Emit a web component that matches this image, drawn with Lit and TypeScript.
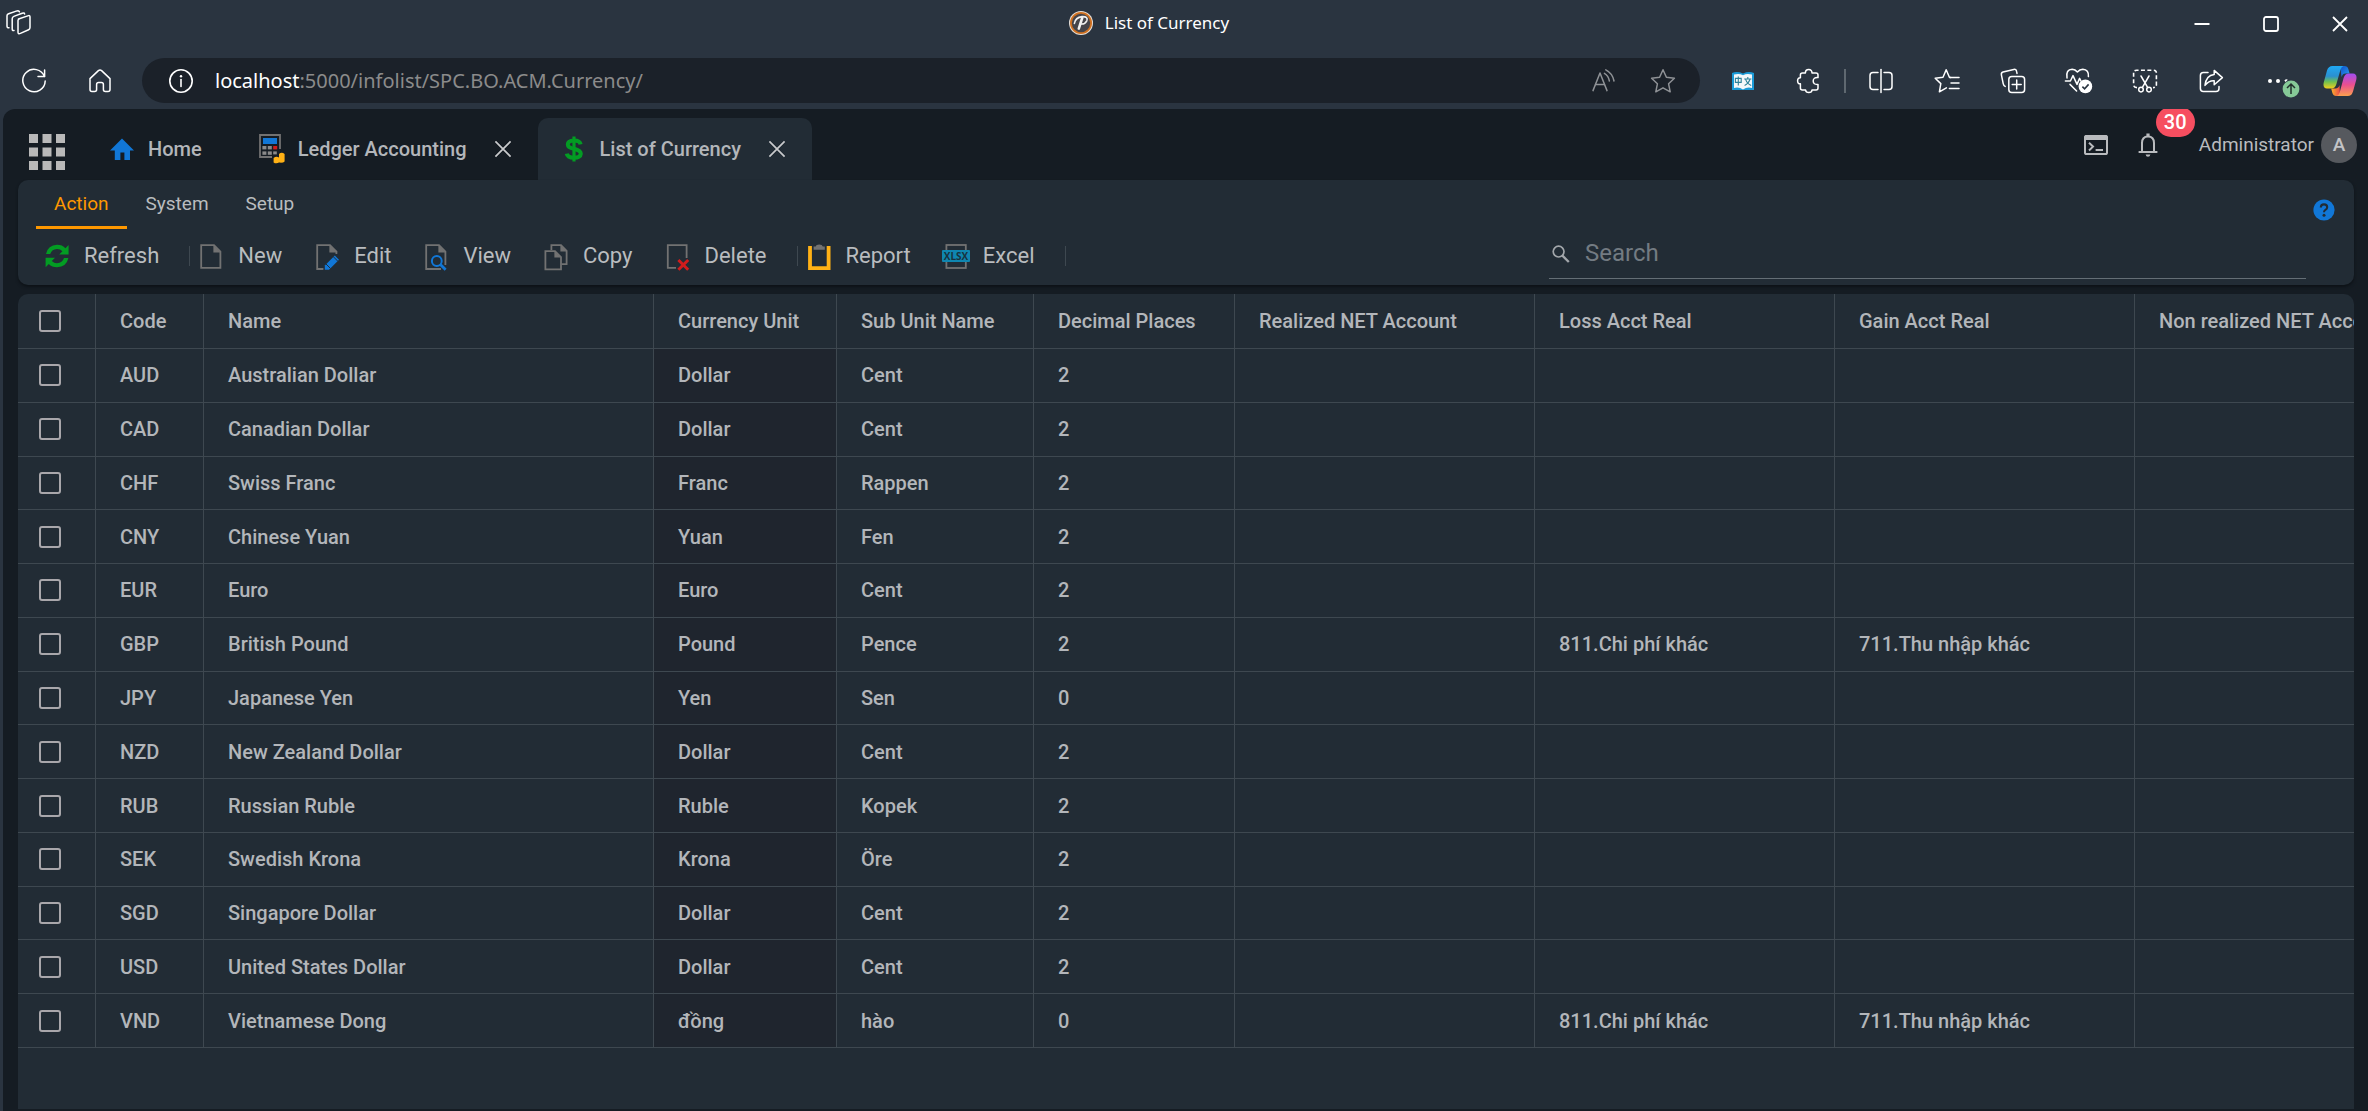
import { LitElement, html, css, svg, type TemplateResult } from "lit";
import { customElement, state } from "lit/decorators.js";
import { classMap } from "lit/directives/class-map.js";

type Icon = TemplateResult;

const box = (w: number, h: number, body: unknown): Icon =>
  html`<svg width=${w} height=${h} viewBox="0 0 ${w} ${h}" fill="none" aria-hidden="true">${body}</svg>`;

const line = (w: number, h: number, body: unknown): Icon =>
  box(w, h, svg`<g stroke="currentColor" stroke-width="1.5" stroke-linecap="round" stroke-linejoin="round">${body}</g>`);

/* Browser icons */
const workspaces = line(26, 26, svg`
  <path d="M12.5 9 L22.5 5.6 Q24 5.2 24 7 V17.5 Q24 19.2 22.6 19.8 L14.4 23.4 Q12 24.4 12 22.2 V10.6 Q12 9.2 13.4 8.7"/>
  <path d="M8 20.5 Q6.2 21 6.2 19 V8.8 Q6.2 7 7.8 6.4 L16.2 3.2 Q18.4 2.4 18.6 4"/>
  <path d="M3 17.8 Q1 18 1 16 V5.8 Q1 4.4 2.6 3.8 L11 .9 Q13 .4 13.4 1.8"/>`);
const reload = line(26, 26, svg`<path d="M23.4 8.4 A11.2 11.2 0 1 0 24.2 13"/><path d="M23.6 2 V8.6 H17"/>`);
const home = line(24, 26, svg`<path d="M2 10.6 L10.4 2.6 Q12 1.4 13.6 2.6 L22 10.6 V21.6 Q22 23.6 20 23.6 H17.4 Q15.4 23.6 15.4 21.6 V16.6 Q15.4 14.6 13.4 14.6 H10.6 Q8.6 14.6 8.6 16.6 V21.6 Q8.6 23.6 6.6 23.6 H4 Q2 23.6 2 21.6 Z"/>`);
const info = box(26, 26, svg`<circle cx="13" cy="13" r="11.2" stroke="currentColor" stroke-width="1.6"/><path d="M13 11.6 V18.4" stroke="currentColor" stroke-width="1.6" stroke-linecap="round"/><circle cx="13" cy="8.2" r="1.2" fill="currentColor"/>`);
const readAloud = line(26, 26, svg`<path d="M2 22.6 L9 5 L16 22.6"/><path d="M4.6 16.4 H13.4"/><path d="M13.4 5.4 Q17.4 7.6 18.4 13"/><path d="M14.8 1.8 Q21.6 5.2 23 13"/>`);
const star = line(26, 26, svg`<path d="M13 1.8 L16.4 9.2 L24.4 10.2 L18.6 15.8 L20.2 23.8 L13 19.8 L5.8 23.8 L7.4 15.8 L1.6 10.2 L9.6 9.2 Z"/>`);
const dictionary = box(24, 22, svg`
  <path d="M1 3 Q6 1 12 3.4 Q18 1 23 3 V20 H1 Z" fill="#1b9ad6"/>
  <path d="M3 4.6 Q8 3 12 5.2 Q16 3 21 4.6 V18 Q16 16.8 12 19.4 Q8 16.8 3 18 Z" fill="#f4f7f9"/>
  <g stroke="#2f8299" stroke-width="1.1"><path d="M4.4 8.4 H10.2 V12.4 H4.4 Z M7.3 6.6 V15.6"/><path d="M13.2 9 H20.4 M16.8 7 V9 M19 9.4 Q17.6 13.6 13.6 15.4 M14.6 9.4 Q16 13.6 20.2 15.4"/></g>`);
const puzzle = line(26, 26, svg`<path d="M9.4 5 H6.4 Q4.4 5 4.4 7 V9.8 Q1.6 9.6 1.6 12.8 Q1.6 16 4.4 15.8 V20 Q4.4 22 6.4 22 H9.6 Q9.8 24.6 12.8 24.6 Q15.8 24.6 16 22 H20 Q22 22 22 20 V16.4 Q17.2 16.8 17.2 13 Q17.2 9.2 22 9.6 V7 Q22 5 20 5 H16 Q16 1.6 12.7 1.6 Q9.4 1.6 9.4 5 Z"/>`);
const splitScreen = line(26, 26, svg`<path d="M10 4.4 H5 Q2 4.4 2 7.4 V18.6 Q2 21.6 5 21.6 H10"/><path d="M16 4.4 H21 Q24 4.4 24 7.4 V18.6 Q24 21.6 21 21.6 H16"/><path d="M13 1.6 V24.4"/>`);
const favorites = line(26, 26, svg`<path d="M16.8 9.4 L15.4 9.2 L12.2 1.8 L9 9.2 L1.2 10.2 L6.8 15.6 L5.4 23.8 L12.4 19.8"/><path d="M15.6 9.4 H25 M17 15 H25 M15.4 20.4 H25"/>`);
const collections = line(26, 26, svg`<rect x="8.8" y="8.6" width="15.8" height="15.8" rx="3"/><path d="M16.7 12 V21 M12.2 16.5 H21.2"/><path d="M5.2 18.4 Q3.6 17.6 3.2 15.6 L1.4 6.8 Q1 4.6 3 4 L13.8 1.4 Q16.2 1 16.6 3.4 L17 5.4"/>`);
const essentials = box(30, 28, svg`
  <g stroke="currentColor" stroke-width="1.5" stroke-linecap="round" stroke-linejoin="round">
  <path d="M3 11 Q1.6 2.4 8.2 2.2 Q11.2 2.2 13.4 5 Q15.6 2.2 18.8 2.2 Q25 2.6 24.4 9.6"/>
  <path d="M1.4 14 H6.4 L9 8.6 L13 17.4 L15.6 11.4 L17 14"/><path d="M6 17.4 L12.6 24"/></g>
  <circle cx="21.4" cy="19.4" r="6.8" fill="currentColor"/><path d="M18.4 19.6 L20.6 21.8 L24.6 17.4" stroke="#2a3440" stroke-width="1.6"/>`);
const screenshot = box(26, 26, svg`
  <path d="M5 19.6 Q1.6 19.6 1.6 16.6 V5 Q1.6 2.2 4.6 2.2 H21.4 Q24.4 2.2 24.4 5 V16.6 Q24.4 19.6 21 19.6" stroke="currentColor" stroke-width="1.6" stroke-dasharray="4 2.4"/>
  <g stroke="currentColor" stroke-width="1.5" stroke-linecap="round"><path d="M9 8 L15.6 19.4 M17 8 L10.4 19.4"/><circle cx="9" cy="21.6" r="2.3"/><circle cx="17" cy="21.6" r="2.3"/></g>`);
const share = line(26, 26, svg`<path d="M10 4.4 H5.4 Q2.4 4.4 2.4 7.4 V20.6 Q2.4 23.6 5.4 23.6 H18 Q21 23.6 21 20.6 V18.4"/><path d="M16.2 2.4 L24.4 9.6 L16.2 16.8 V12.8 Q11 12.4 7 17.4 Q8 7.2 16.2 6.4 Z"/>`);
const more = box(36, 34, svg`
  <g fill="currentColor"><circle cx="4" cy="17" r="2"/><circle cx="12" cy="17" r="2"/><path d="M18.4 16.6 Q20 14.6 21.8 15.8 L19.6 18 Z"/></g>
  <circle cx="25" cy="25" r="8.4" fill="#86c997"/><path d="M25 30 V20.2 M21 24 L25 20 L29 24" stroke="#22302c" stroke-width="1.5"/>`);
const copilot = html`<svg width="34" height="32" viewBox="0 0 34 32" aria-hidden="true">
  <defs>
    <linearGradient id="cpA" x1="0" y1="0" x2="0" y2="1"><stop offset="0" stop-color="#1fa9f4"/><stop offset=".45" stop-color="#2b8fd0"/><stop offset=".7" stop-color="#6fc04f"/><stop offset="1" stop-color="#f4cf1c"/></linearGradient>
    <linearGradient id="cpB" x1="0" y1="0" x2="0" y2="1"><stop offset="0" stop-color="#a24df2"/><stop offset=".5" stop-color="#ea4f8f"/><stop offset="1" stop-color="#fba04e"/></linearGradient>
    <linearGradient id="cpC" x1="0" y1="0" x2="1" y2="1"><stop offset="0" stop-color="#0d4fc9"/><stop offset="1" stop-color="#2ea0f0"/></linearGradient>
    <linearGradient id="cpD" x1="0" y1="0" x2="1" y2="0"><stop offset="0" stop-color="#fbb02c"/><stop offset="1" stop-color="#ec4a4a"/></linearGradient>
  </defs>
  <path d="M17 1 H21.5 Q24.5 1 25.4 4.2 L26.6 8.6 H22.6 Q19.6 8.6 18.6 12 Z" fill="url(#cpC)"/>
  <path d="M17 31 H13 Q10.4 31 9.4 28 L8.2 23.6 H12.4 Q15.6 23.4 16.6 20 Z" fill="url(#cpD)"/>
  <path d="M9.4 1 H20.6 Q18.4 1.6 17.4 5 L13.4 19 Q12.2 23.6 8 23.6 H4 Q-.6 23.2 .8 17.2 L4 5.6 Q5.4 1 9.4 1 Z" fill="url(#cpA)"/>
  <path d="M24.8 31 H13.6 Q15.8 30.4 16.8 27 L20.6 13 Q22 8.6 26 8.6 H30 Q34.6 9 33.2 15 L30 26.4 Q28.6 31 24.8 31 Z" fill="url(#cpB)"/>
</svg>`;
const favicon = html`<svg class="favicon" width="24" height="24" viewBox="0 0 24 24" aria-hidden="true">
  <circle cx="12" cy="12" r="12" fill="#e6dfd8"/><circle cx="12" cy="12" r="11" fill="#cf7020"/><circle cx="12" cy="12" r="9.2" fill="#45444a"/>
  <g fill="none" stroke="#f1f1f1" stroke-linecap="round"><path d="M13.2 7 L9.8 17.6" stroke-width="2.6"/><path d="M5.4 12.4 Q6.4 6.4 13 5.6 Q19.6 5.4 17.8 9.8 Q16 13.4 12 13" stroke-width="1.6"/></g>
</svg>`;
const winMin = box(16, 16, svg`<path d="M.5 8 H15.5" stroke="currentColor" stroke-width="2"/>`);
const winMax = box(16, 16, svg`<rect x="1" y="1" width="14" height="14" rx="2" stroke="currentColor" stroke-width="1.8"/>`);
const winClose = box(16, 16, svg`<path d="M1 1 L15 15 M15 1 L1 15" stroke="currentColor" stroke-width="1.8"/>`);

/* Application icons */
const launcher = box(36, 36, svg`<g fill="currentColor">${[0, 13.5, 27].map((y) => [0, 13.5, 27].map((x) => svg`<rect x=${x} y=${y} width="9" height="9"/>`))}</g>`);
const house = box(24, 24, svg`<path d="M12 1.4 L24 13.4 H20 V23 H14.4 V15.6 H10.4 V23 H4.8 V13.4 H0 Z" fill="#1177d7"/>`);
const calculator = box(26, 30, svg`
  <path d="M13 23 H1 V1 H21 V15" stroke="#727272" stroke-width="1.8"/>
  <rect x="4" y="4" width="14" height="6" fill="#1177d7"/>
  <g fill="#8a8a8a"><rect x="3.4" y="12" width="4" height="3.4"/><rect x="8.8" y="12" width="4" height="3.4"/><rect x="3.4" y="17.4" width="4" height="3.4"/><rect x="8.8" y="17.4" width="4" height="3.4"/><rect x="14.2" y="17.4" width="3.6" height="3"/></g>
  <rect x="14.2" y="12" width="4" height="3.4" fill="#d11c1c"/>
  <g fill="#ffb115"><path d="M20 20 Q22.6 17.6 25.6 20 V27.4 Q24.4 28.8 21 28.6 H20 Z"/><path d="M14.6 24 Q17 21.8 20 23.4 V28.6 Q17 30 14.6 28.4 Z"/></g>`);
const dollar = box(24, 28, svg`<g stroke="#039c23"><path d="M18.6 9.4 Q18 5.4 12 5.4 Q5.8 5.6 5.8 9.4 Q5.8 12.4 12 13.8 Q18.8 15.4 18.8 18.8 Q18.4 22.8 12 22.8 Q5.4 22.6 4.8 18.6" stroke-width="4"/><path d="M12 1.4 V26.6" stroke-width="3.2"/></g>`);
const tabClose = box(18, 18, svg`<path d="M1.4 1.4 L16.6 16.6 M16.6 1.4 L1.4 16.6" stroke="currentColor" stroke-width="1.7"/>`);
const consoleIcon = box(26, 22, svg`<rect x="2" y="2" width="22" height="18" rx="1.6" stroke="currentColor" stroke-width="2"/><path d="M1 5 Q1 1 3 1 H23 Q25 1 25 5 V6 H1 Z" fill="currentColor"/><path d="M6 8.8 L10 12.6 L6 16.4 M12.6 16 H20" stroke="currentColor" stroke-width="2"/>`);
const bell = box(22, 26, svg`<path d="M5 20 V11 Q5 4.4 11 4.4 Q17 4.4 17 11 V20" stroke="currentColor" stroke-width="2"/><path d="M1.6 20 H20.4" stroke="currentColor" stroke-width="2"/><path d="M9.4 1.4 H12.6 V4.4 H9.4 Z M8.6 22.4 H13.4 Q13 24.8 11 24.8 Q9 24.8 8.6 22.4 Z" fill="currentColor"/>`);
const help = box(22, 22, svg`<circle cx="11" cy="11" r="10.6" fill="#1177d7"/><path d="M7.8 8.6 Q7.8 5.4 11 5.4 Q14.2 5.4 14.2 8.2 Q14.2 9.8 12.4 10.8 Q11 11.6 11 13.2" stroke="#222c35" stroke-width="2.1"/><circle cx="11" cy="16.2" r="1.5" fill="#222c35"/>`);
const magnifier = box(20, 20, svg`<circle cx="7.6" cy="8.6" r="5.4" stroke="currentColor" stroke-width="1.7"/><path d="M11.4 12.6 L17.8 19" stroke="currentColor" stroke-width="2.3"/>`);

const grey = "#727272";
const refresh = box(30, 30, svg`<g fill="#039c23"><path d="M4 13 Q6 4 15 3.8 Q20.4 3.8 23.4 7.2 L26.6 4 V13.4 H17.2 L20.4 10.2 Q18.4 8 15 8 Q9.8 8.2 8.2 13 Z"/><path d="M26.4 17 Q24.4 26 15 26.2 Q10 26.2 6.8 23 L3.6 26.2 V16.8 H13 L9.8 20 Q12 22.2 15 22.2 Q20.4 22 22 17 Z"/></g>`);
const pageNew = box(30, 30, svg`<path d="M5.2 4.2 H18 L24.4 10.6 V26.8 H5.2 Z" stroke=${grey} stroke-width="1.8"/><path d="M17.4 4 V11.4 H24.8 Z" fill=${grey}/>`);
const pageEdit = box(30, 30, svg`<path d="M11.4 28 H5.2 V4.2 H18 L24.4 10.6 V13" stroke=${grey} stroke-width="1.8"/><path d="M17.4 4 V11.4 H25.2 V10.6 Z" fill=${grey}/><path d="M12.8 28.8 V24.6 L22.8 14.6 L27 18.8 L17 28.8 Z" fill="#1177d7"/><path d="M14 23 L18.6 27.6 M21 15.4 L26 20.4" stroke="#222c35" stroke-width="1"/>`);
const pageView = box(30, 30, svg`<path d="M20 28 H5.2 V4.2 H18 L24.4 10.6 V24" stroke=${grey} stroke-width="1.8"/><path d="M17.4 4 V11.4 H25 Z" fill=${grey}/><circle cx="15.8" cy="20" r="7" fill="#222c35"/><circle cx="15.8" cy="20" r="4.9" stroke="#1177d7" stroke-width="2"/><path d="M19.4 23.6 L24.6 28.8" stroke="#1177d7" stroke-width="2.8"/>`);
const pageCopy = box(30, 30, svg`<path d="M10.4 9 V4.2 H20 L25.6 9.8 V23.2 H20.4" stroke=${grey} stroke-width="1.8"/><path d="M19.4 4 V10.4 H26 Z" fill=${grey}/><path d="M4.4 10.2 H14 L20 16.2 V28.4 H4.4 Z" stroke=${grey} stroke-width="1.8"/><path d="M13.4 10 V16.6 H20 Z" fill=${grey}/>`);
const pageDelete = box(30, 30, svg`<path d="M13 26.8 H4.8 V4.2 H23.6 V17" stroke=${grey} stroke-width="1.8"/><path d="M15.4 19 L25.2 28.8 M25.2 19 L15.4 28.8" stroke="#d11c1c" stroke-width="3"/>`);
const clipboard = box(30, 30, svg`<path d="M6 5 V27.2 H24.6 V5" stroke="#ffb115" stroke-width="3.8"/><path d="M9.6 8.8 V5.4 H11.6 Q12 3.6 15.2 3.6 Q18.4 3.6 18.8 5.4 H20.8 V8.8 Z" fill=${grey}/>`);
const xlsx = html`<svg width="30" height="30" viewBox="0 0 30 30" fill="none" aria-hidden="true"><rect x="5.4" y="4" width="19.4" height="23" stroke=${grey} stroke-width="1.8"/><rect x="1" y="9" width="28" height="12" rx="1" fill="#0f86b0"/><text class="xlsx" x="15" y="18.6" text-anchor="middle" fill="#18323e">XLSX</text></svg>`;

interface Command { label: string; icon: Icon; split?: boolean }
const commands: Command[] = [
  { label: "Refresh", icon: refresh, split: true },
  { label: "New", icon: pageNew },
  { label: "Edit", icon: pageEdit },
  { label: "View", icon: pageView },
  { label: "Copy", icon: pageCopy },
  { label: "Delete", icon: pageDelete, split: true },
  { label: "Report", icon: clipboard },
  { label: "Excel", icon: xlsx, split: true },
];

const columns = [
  ["Code", "code"], ["Name", "name"], ["Currency Unit", "unit"], ["Sub Unit Name", "sub"], ["Decimal Places", "dec"],
  ["Realized NET Account", "acct"], ["Loss Acct Real", "acct"], ["Gain Acct Real", "acct"], ["Non realized NET Account", "acct"],
];

const loss = "811.Chi phí khác";
const gain = "711.Thu nhập khác";
const rows: string[][] = [
  ["AUD", "Australian Dollar", "Dollar", "Cent", "2", "", "", "", ""],
  ["CAD", "Canadian Dollar", "Dollar", "Cent", "2", "", "", "", ""],
  ["CHF", "Swiss Franc", "Franc", "Rappen", "2", "", "", "", ""],
  ["CNY", "Chinese Yuan", "Yuan", "Fen", "2", "", "", "", ""],
  ["EUR", "Euro", "Euro", "Cent", "2", "", "", "", ""],
  ["GBP", "British Pound", "Pound", "Pence", "2", "", loss, gain, ""],
  ["JPY", "Japanese Yen", "Yen", "Sen", "0", "", "", "", ""],
  ["NZD", "New Zealand Dollar", "Dollar", "Cent", "2", "", "", "", ""],
  ["RUB", "Russian Ruble", "Ruble", "Kopek", "2", "", "", "", ""],
  ["SEK", "Swedish Krona", "Krona", "Öre", "2", "", "", "", ""],
  ["SGD", "Singapore Dollar", "Dollar", "Cent", "2", "", "", "", ""],
  ["USD", "United States Dollar", "Dollar", "Cent", "2", "", "", "", ""],
  ["VND", "Vietnamese Dong", "đồng", "hào", "0", "", loss, gain, ""],
];

const reset = css`
  :host, * { box-sizing: border-box; }
  svg { display: block; flex: none; }
  button { display: flex; align-items: center; margin: 0; padding: 0; border: 0; background: none; color: inherit; font: inherit; cursor: pointer; }
`;

@customElement("browser-bar")
class BrowserBar extends LitElement {
  static styles = [reset, css`
    :host { display: block; background: #2a3440; color: #fff; font-family: "Noto Sans", sans-serif; }
    .title { display: flex; align-items: center; height: 43px; padding-top: 2px; }
    .lead { flex: 1 1 0; padding-left: 6px; }
    .caption { display: flex; align-items: center; gap: 12px; font-size: 17px; line-height: 24px; }
    .window { flex: 1 1 76px; display: flex; justify-content: flex-end; }
    .window button { justify-content: center; width: 69px; height: 41px; padding-top: 3px; }
    .window .close { width: 63px; padding-left: 6px; }
    .bar { display: flex; align-items: center; height: 66px; padding: 15px 0 6px 1px; }
    .cell { justify-content: center; width: 66px; height: 45px; flex: none; }
    .cell.more { padding-left: 14px; }
    .cell.copilot { width: 58px; padding-left: 2px; }
    .address { display: flex; align-items: center; flex: 1; min-width: 0; height: 45px; margin: 0 10px 0 9px; padding: 0 24px 0 26px; border-radius: 23px; background: #1b2129; }
    .url { flex: 1; min-width: 0; margin-left: 21px; overflow: hidden; color: #8b8b8b; font-size: 20px; line-height: 30px; white-space: nowrap; text-align: left; }
    .url strong { color: #fff; font-weight: 400; }
    .dim { color: #8f9296; margin-left: 33px; }
    .rule { flex: none; width: 2px; height: 24px; margin: 0 2px; background: #5f6870; }
  `];

  render() {
    return html`
      <div class="title">
        <div class="lead"><button aria-label="Workspaces">${workspaces}</button></div>
        <div class="caption">${favicon}<span>List of Currency</span></div>
        <div class="window">
          <button aria-label="Minimize">${winMin}</button>
          <button aria-label="Maximize">${winMax}</button>
          <button class="close" aria-label="Close">${winClose}</button>
        </div>
      </div>
      <div class="bar">
        <button class="cell" aria-label="Reload">${reload}</button>
        <button class="cell" aria-label="Home">${home}</button>
        <div class="address">
          <button aria-label="Site information">${info}</button>
          <button class="url"><span><strong>localhost</strong>:5000/infolist/SPC.BO.ACM.Currency/</span></button>
          <button class="dim" aria-label="Read aloud">${readAloud}</button>
          <button class="dim" aria-label="Add to favorites">${star}</button>
        </div>
        <button class="cell" aria-label="Dictionary">${dictionary}</button>
        <button class="cell" aria-label="Extensions">${puzzle}</button>
        <span class="rule"></span>
        <button class="cell" aria-label="Split screen">${splitScreen}</button>
        <button class="cell" aria-label="Favorites">${favorites}</button>
        <button class="cell" aria-label="Collections">${collections}</button>
        <button class="cell" aria-label="Browser essentials">${essentials}</button>
        <button class="cell" aria-label="Screenshot">${screenshot}</button>
        <button class="cell" aria-label="Share">${share}</button>
        <button class="cell more" aria-label="Settings and more">${more}</button>
        <button class="cell copilot" aria-label="Copilot">${copilot}</button>
      </div>`;
  }
}

@customElement("app-header")
class AppHeader extends LitElement {
  static styles = [reset, css`
    :host { display: flex; height: 71px; padding: 9px 11px 0 26px; color: #b9bbbe; }
    .launcher { margin-right: 21px; padding-top: 6px; color: #b9b9b9; }
    .tabs { display: flex; flex: 1; min-width: 0; }
    .tab { display: flex; align-items: center; padding: 0 26px 0 24px; border-radius: 10px 10px 0 0; color: #b3b6ba; font-size: 20px; line-height: 24px; font-weight: 500; white-space: nowrap; }
    .tab.first { padding-right: 34px; }
    .tab.active { background: #222c35; }
    .open { gap: 14px; height: 62px; }
    .pic { display: flex; justify-content: center; width: 24px; }
    .shut { margin-left: 27px; color: #c9cacc; }
    .user { display: flex; align-items: center; height: 54px; }
    .alerts { position: relative; margin: 0 40px 0 28px; }
    .count { position: absolute; left: 19px; top: -25px; height: 30px; padding: 0 8px; border-radius: 15px; background: #f64e60; color: #fff; font-size: 20px; line-height: 30px; font-weight: 500; }
    .who { gap: 7px; font-size: 19px; line-height: 24px; }
    .avatar { width: 36px; height: 36px; border-radius: 50%; background: #56595e; color: #c3c4c6; line-height: 36px; font-weight: 500; text-align: center; }
  `];

  render() {
    return html`
      <button class="launcher" aria-label="Applications">${launcher}</button>
      <nav class="tabs">
        <div class="tab first"><button class="open"><span class="pic">${house}</span>Home</button></div>
        <div class="tab"><button class="open"><span class="pic">${calculator}</span>Ledger Accounting</button><button class="shut" aria-label="Close Ledger Accounting">${tabClose}</button></div>
        <div class="tab active"><button class="open"><span class="pic">${dollar}</span>List of Currency</button><button class="shut" aria-label="Close List of Currency">${tabClose}</button></div>
      </nav>
      <div class="user">
        <button aria-label="Console">${consoleIcon}</button>
        <button class="alerts" aria-label="Notifications">${bell}<span class="count">30</span></button>
        <button class="who">Administrator<span class="avatar">A</span></button>
      </div>`;
  }
}

@customElement("command-ribbon")
class CommandRibbon extends LitElement {
  @state() private current = "Action";

  static styles = [reset, css`
    :host { display: block; border-radius: 10px; background: #222c35; box-shadow: 0 2px 3px #0d1217; color: #b9bcbf; }
    .top { display: flex; align-items: center; justify-content: space-between; padding: 0 19px 0 18px; }
    .groups { display: flex; gap: 1px; }
    .group { height: 49px; padding: 2px 18px 0; border-bottom: 3px solid transparent; font-size: 19px; line-height: 24px; }
    .group.on { border-color: #ff9800; color: #ff9800; }
    .help { padding-top: 10px; }
    .row { display: flex; align-items: center; justify-content: space-between; height: 56px; padding: 0 48px 2px 24px; }
    .commands { display: flex; align-items: center; }
    .cmd { gap: 12px; margin-right: 30px; font-size: 22px; line-height: 26px; }
    .bar { width: 1px; height: 20px; margin-right: 6px; background: #3e4850; }
    .xlsx { font: 700 10px "Open Sans", sans-serif; }
    .search { display: flex; align-items: center; align-self: flex-start; gap: 14px; flex: 0 1 757px; height: 50px; padding: 0 0 2px 2px; border-bottom: 1px solid #646e75; color: #a3a7ab; }
    input { flex: 1; min-width: 0; padding: 0; border: 0; outline: 0; background: none; color: #c3c6c9; font: inherit; font-size: 24px; line-height: 26px; }
    input::placeholder { color: #737b82; opacity: 1; }
  `];

  render() {
    return html`
      <div class="top">
        <div class="groups">${["Action", "System", "Setup"].map((g) => html`
          <button class=${classMap({ group: true, on: g === this.current })} @click=${() => (this.current = g)}>${g}</button>`)}
        </div>
        <button class="help" aria-label="Help">${help}</button>
      </div>
      <div class="row">
        <div class="commands">${commands.map((c) => html`
          <button class="cmd">${c.icon}<span>${c.label}</span></button>${c.split ? html`<span class="bar"></span>` : ""}`)}
        </div>
        <label class="search">${magnifier}<input type="search" placeholder="Search" aria-label="Search"></label>
      </div>`;
  }
}

@customElement("currency-table")
class CurrencyTable extends LitElement {
  static styles = [reset, css`
    :host { display: block; overflow: hidden; border-radius: 10px 10px 0 0; background: #222c35; }
    table { width: 100%; height: 754px; table-layout: fixed; border-collapse: separate; border-spacing: 0; color: #b3b6ba; font-size: 20px; line-height: 24px; }
    thead tr { height: 55px; }
    tbody tr { height: 53px; }
    th, td { padding: 0 0 0 24px; border-right: 1px solid #3e4850; border-bottom: 1px solid #3e4850; font-weight: 500; text-align: left; white-space: nowrap; overflow: hidden; }
    td.unit { background: #1f252e; }
    col.check { width: 78px; }
    col.code { width: 108px; }
    col.name { width: 450px; }
    col.unit { width: 183px; }
    col.sub { width: 197px; }
    col.dec { width: 201px; }
    col.acct { width: 300px; }
    .pick { padding-left: 21px; }
    input { display: block; width: 22px; height: 22px; margin: 0; border: 2px solid #a9a7ab; border-radius: 3px; appearance: none; }
    input:checked { background: #ff9800; }
  `];

  render() {
    return html`
      <table>
        <colgroup><col class="check">${columns.map(([, k]) => html`<col class=${k}>`)}</colgroup>
        <thead><tr>
          <th class="pick"><input type="checkbox" aria-label="Select all"></th>
          ${columns.map(([t]) => html`<th scope="col">${t}</th>`)}
        </tr></thead>
        <tbody>${rows.map((r) => html`<tr>
          <td class="pick"><input type="checkbox" aria-label="Select ${r[0]}"></td>
          ${r.map((v, i) => html`<td class=${columns[i][1]}>${v}</td>`)}
        </tr>`)}</tbody>
      </table>`;
  }
}

@customElement("app-root")
class AppRoot extends LitElement {
  static styles = css`
    :host { display: flex; flex-direction: column; min-height: 100vh; background: #2a3440; font-family: Roboto, sans-serif; }
    main { display: flex; flex-direction: column; flex: 1; min-width: 0; margin-left: 3px; padding-bottom: 2px; overflow: hidden; border-radius: 12px 12px 0 0; background: #151c23; }
    command-ribbon { margin: 0 14px 0 15px; }
    currency-table { flex: 1; margin: 9px 14px 0 15px; }
  `;

  render() {
    return html`
      <browser-bar></browser-bar>
      <main>
        <app-header></app-header>
        <command-ribbon></command-ribbon>
        <currency-table></currency-table>
      </main>`;
  }
}
